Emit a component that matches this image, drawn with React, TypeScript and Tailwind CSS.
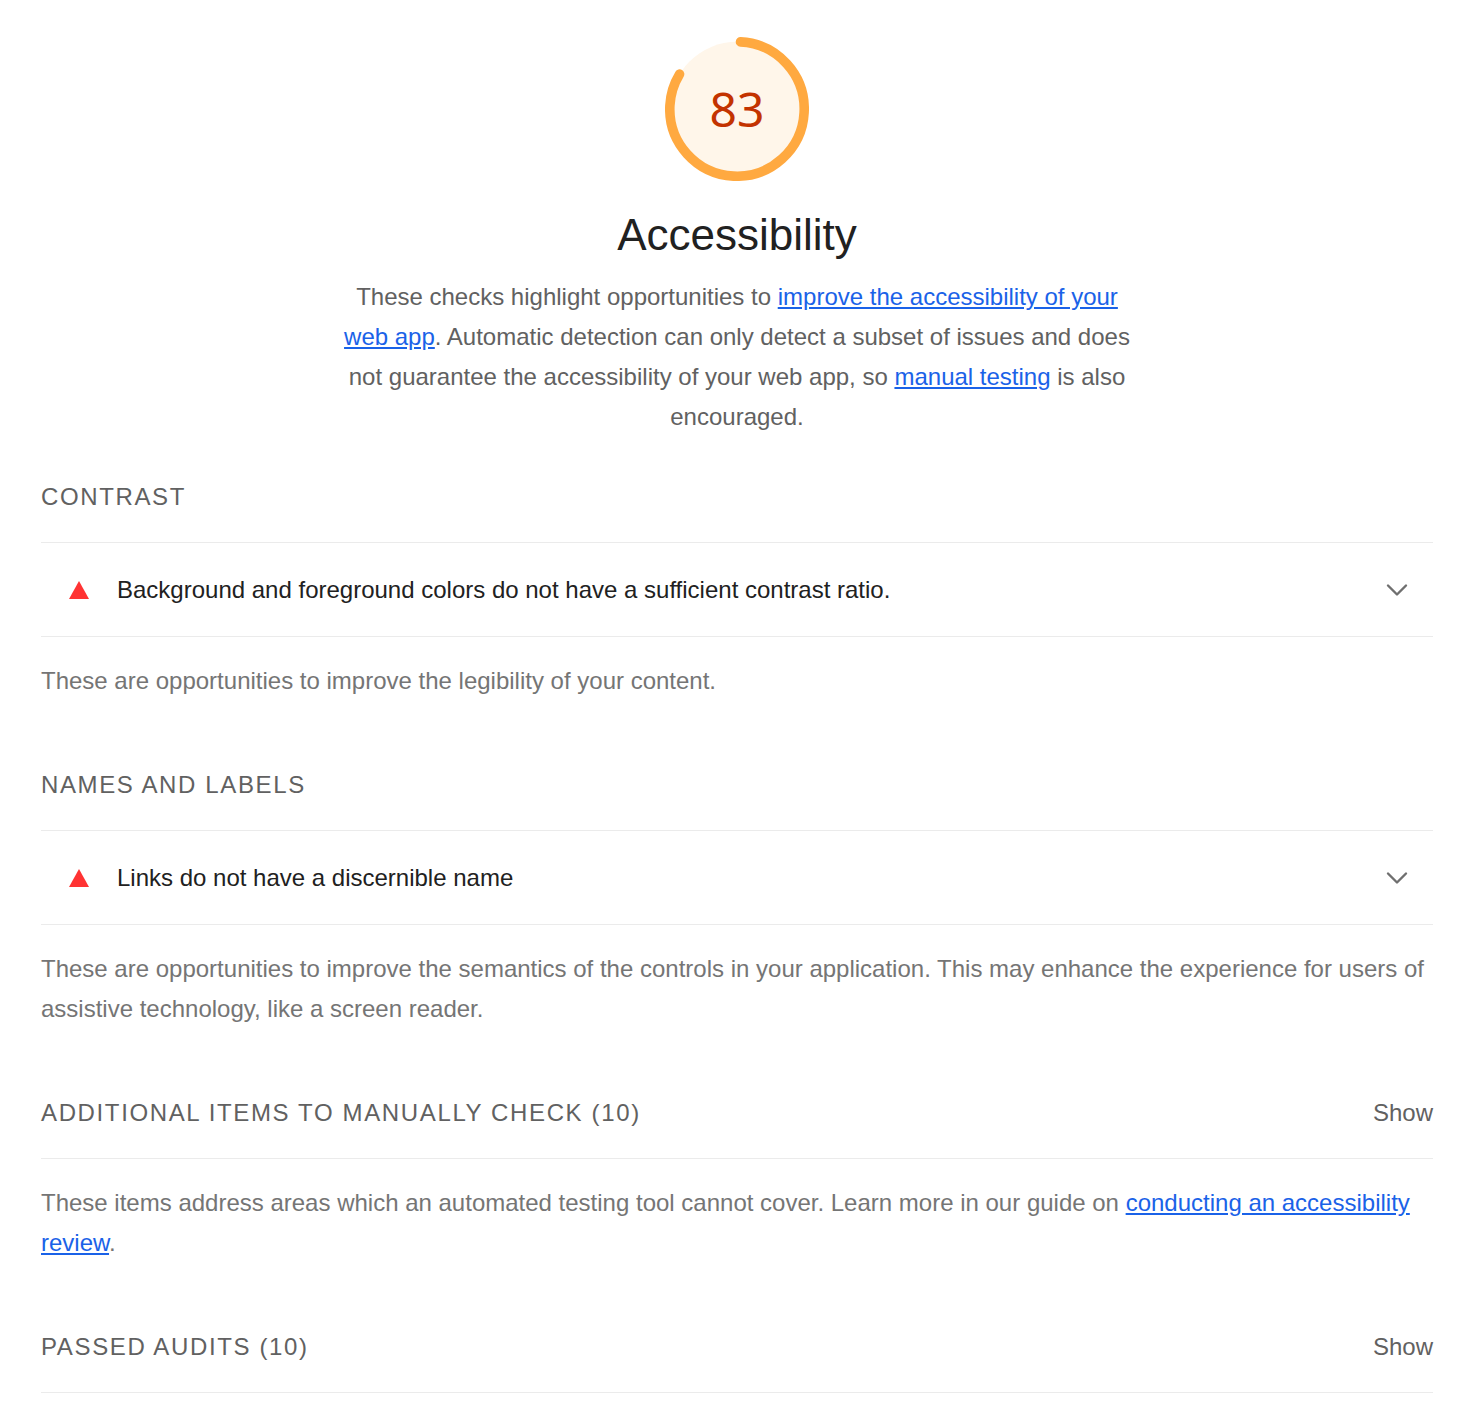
import { ChevronDown } from "lucide-react";

function Gauge({ score }: { score: number }) {
  const r = 56;
  const circ = 2 * Math.PI * r;
  return (
    <div className="relative h-[144px] w-[144px]">
      <svg viewBox="0 0 120 120" className="h-[144px] w-[144px]">
        <circle cx="60" cy="60" r={r} fill="#fff6ea" />
        <circle
          cx="60"
          cy="60"
          r={r}
          fill="none"
          stroke="#ffa940"
          strokeWidth="8"
          strokeLinecap="round"
          strokeDasharray={`${(score / 100) * circ - 1} ${circ}`}
          transform="rotate(-87 60 60)"
        />
      </svg>
      <div className="absolute inset-0 flex items-center justify-center font-['Noto_Sans',sans-serif] text-[48px] text-[#c33300]">
        {score}
      </div>
    </div>
  );
}

function FailIcon() {
  return (
    <svg width="20" height="18" viewBox="0 0 20 18" className="shrink-0">
      <polygon points="10,0 20,18 0,18" fill="#ff3333" />
    </svg>
  );
}

function GroupHeader({ title, show }: { title: string; show?: boolean }) {
  return (
    <div className="flex items-center justify-between border-b border-[#ebebeb] pb-[25px] leading-[40px]">
      <h2 className="text-[24px] uppercase tracking-[0.068em] text-[#616161]">{title}</h2>
      {show && <span className="text-[24px] text-[#616161]">Show</span>}
    </div>
  );
}

function AuditRow({ text }: { text: string }) {
  return (
    <div className="flex h-[94px] items-center border-b border-[#ebebeb] pl-[28px] pr-[18px]">
      <FailIcon />
      <span className="ml-[28px] flex-1 text-[24px] text-[#212121]">{text}</span>
      <ChevronDown size={36} strokeWidth={1.6} className="text-[#6f6f6f]" />
    </div>
  );
}

function Desc({ children }: { children: React.ReactNode }) {
  return <p className="pt-[24px] text-[24px] leading-[40px] text-[#757575]">{children}</p>;
}

const link = "text-[#1a62e8] underline underline-offset-2";

export default function App() {
  return (
    <div className="min-h-screen bg-white font-['Liberation_Sans',Arial,sans-serif]">
      <div className="pl-[41px] pr-[46px] pb-[30px]">
        <div className="flex flex-col items-center pt-[37px]">
          <Gauge score={83} />
          <h1 className="mt-[26px] text-[44px] leading-[56px] text-[#212121]">Accessibility</h1>
          <p className="mt-[14px] max-w-[800px] text-center text-[24px] leading-[40px] text-[#616161]">
            These checks highlight opportunities to{" "}
            <a className={link}>improve the accessibility of your web app</a>. Automatic
            detection can only detect a subset of issues and does not guarantee the
            accessibility of your web app, so <a className={link}>manual testing</a> is also
            encouraged.
          </p>
        </div>

        <div className="mt-[40px]">
          <GroupHeader title="Contrast" />
          <AuditRow text="Background and foreground colors do not have a sufficient contrast ratio." />
          <Desc>These are opportunities to improve the legibility of your content.</Desc>
        </div>

        <div className="mt-[64px]">
          <GroupHeader title="Names and labels" />
          <AuditRow text="Links do not have a discernible name" />
          <Desc>
            These are opportunities to improve the semantics of the controls in your
            application. This may enhance the experience for users of assistive technology,
            like a screen reader.
          </Desc>
        </div>

        <div className="mt-[64px]">
          <GroupHeader title="Additional items to manually check (10)" show />
          <Desc>
            These items address areas which an automated testing tool cannot cover. Learn more
            in our guide on <a className={link}>conducting an accessibility review</a>.
          </Desc>
        </div>

        <div className="mt-[64px]">
          <GroupHeader title="Passed audits (10)" show />
        </div>
      </div>
    </div>
  );
}
